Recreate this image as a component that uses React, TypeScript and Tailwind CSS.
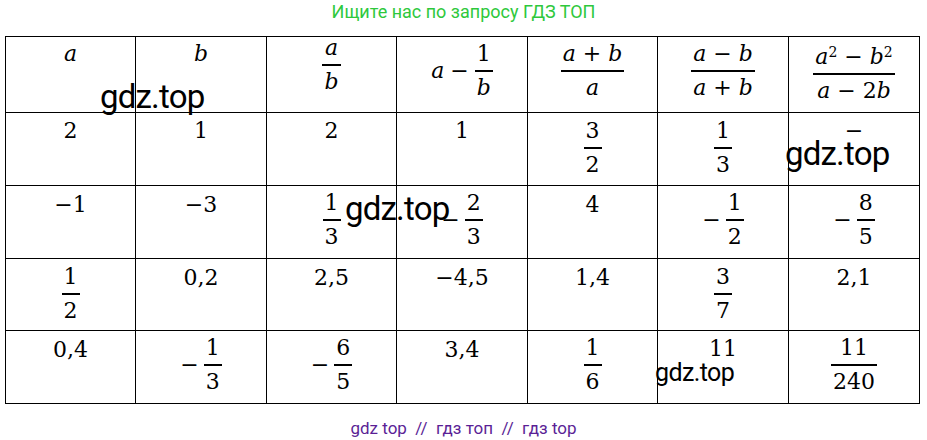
import type { ReactNode } from "react";

function V({ children }: { children: ReactNode }) {
  return <span className="italic">{children}</span>;
}

function Frac({ n, d }: { n: ReactNode; d: ReactNode }) {
  return (
    <span className="inline-flex flex-col items-center">
      <span className="px-[2px] leading-[22px] whitespace-nowrap">{n}</span>
      <span className="h-[2px] self-stretch bg-black my-[5px]" />
      <span className="px-[2px] leading-[22px] whitespace-nowrap">{d}</span>
    </span>
  );
}

function Neg({ n, d }: { n: ReactNode; d: ReactNode }) {
  return (
    <span className="flex items-center gap-[5px]">
      <span>−</span>
      <Frac n={n} d={d} />
    </span>
  );
}

function Cell({ pt, children }: { pt: string; children?: ReactNode }) {
  return (
    <div className={`border-r border-b border-black flex justify-center items-start ${pt}`}>
      <div className="leading-[22px] whitespace-nowrap">{children}</div>
    </div>
  );
}

function Sq({ v }: { v: string }) {
  return (
    <>
      <V>{v}</V>
      <sup className="text-[14px]">2</sup>
    </>
  );
}

export default function App() {
  return (
    <div className="w-[927px] h-[440px] bg-white relative overflow-hidden font-['Roboto',sans-serif]">
      <div className="pt-[2px] text-center text-[18px] leading-[20px] text-[#2ec83c]">
        Ищите нас по запросу ГДЗ ТОП
      </div>

      <div className="mt-[14px] ml-[5px] w-[915px] border-l border-t border-black grid grid-cols-[130px_131px_130px_131px_130px_131px_131px] grid-rows-[76px_73px_73px_72px_73px] font-['DejaVu_Serif',serif] text-[22px] text-black">
        {/* header */}
        <Cell pt="pt-[6px]"><V>a</V></Cell>
        <Cell pt="pt-[6px]"><V>b</V></Cell>
        <Cell pt="pt-0"><Frac n={<V>a</V>} d={<V>b</V>} /></Cell>
        <Cell pt="pt-[6px]">
          <span className="flex items-center gap-[6px]">
            <V>a</V>
            <span>−</span>
            <Frac n="1" d={<V>b</V>} />
          </span>
        </Cell>
        <Cell pt="pt-[6px]"><Frac n={<><V>a</V> + <V>b</V></>} d={<V>a</V>} /></Cell>
        <Cell pt="pt-[6px]"><Frac n={<><V>a</V> − <V>b</V></>} d={<><V>a</V> + <V>b</V></>} /></Cell>
        <Cell pt="pt-[9px]"><Frac n={<><Sq v="a" /> − <Sq v="b" /></>} d={<><V>a</V> − 2<V>b</V></>} /></Cell>

        {/* row 1 */}
        <Cell pt="pt-[7px]">2</Cell>
        <Cell pt="pt-[7px]">1</Cell>
        <Cell pt="pt-[7px]">2</Cell>
        <Cell pt="pt-[7px]">1</Cell>
        <Cell pt="pt-[7px]"><Frac n="3" d="2" /></Cell>
        <Cell pt="pt-[7px]"><Frac n="1" d="3" /></Cell>
        <Cell pt="pt-[7px]">−</Cell>

        {/* row 2 */}
        <Cell pt="pt-[8px]">−1</Cell>
        <Cell pt="pt-[8px]">−3</Cell>
        <Cell pt="pt-[6px]"><Frac n="1" d="3" /></Cell>
        <Cell pt="pt-[6px]"><Neg n="2" d="3" /></Cell>
        <Cell pt="pt-[8px]">4</Cell>
        <Cell pt="pt-[6px]"><Neg n="1" d="2" /></Cell>
        <Cell pt="pt-[6px]"><Neg n="8" d="5" /></Cell>

        {/* row 3 */}
        <Cell pt="pt-[7px]"><Frac n="1" d="2" /></Cell>
        <Cell pt="pt-[8px]">0,2</Cell>
        <Cell pt="pt-[8px]">2,5</Cell>
        <Cell pt="pt-[8px]">−4,5</Cell>
        <Cell pt="pt-[8px]">1,4</Cell>
        <Cell pt="pt-[7px]"><Frac n="3" d="7" /></Cell>
        <Cell pt="pt-[8px]">2,1</Cell>

        {/* row 4 */}
        <Cell pt="pt-[8px]">0,4</Cell>
        <Cell pt="pt-[6px]"><Neg n="1" d="3" /></Cell>
        <Cell pt="pt-[6px]"><Neg n="6" d="5" /></Cell>
        <Cell pt="pt-[8px]">3,4</Cell>
        <Cell pt="pt-[6px]"><Frac n="1" d="6" /></Cell>
        <Cell pt="pt-[7px]">11</Cell>
        <Cell pt="pt-[6px]"><Frac n="11" d="240" /></Cell>
      </div>

      <div className="mt-[14px] text-center text-[17px] leading-[20px] text-[#5b1f96] whitespace-pre">
        gdz top  //  гдз топ  //  гдз top
      </div>

      {/* watermarks */}
      <span className="absolute left-[100px] top-[80px] text-[33px] leading-[33px] tracking-[-0.8px] text-black">gdz.top</span>
      <span className="absolute left-[345px] top-[192px] text-[33px] leading-[33px] tracking-[-0.8px] text-black">gdz.top</span>
      <span className="absolute left-[785px] top-[137px] text-[33px] leading-[33px] tracking-[-0.8px] text-black">gdz.top</span>
      <span className="absolute left-[655px] top-[360px] text-[25px] leading-[25px] tracking-[-0.6px] text-black">gdz.top</span>
    </div>
  );
}
